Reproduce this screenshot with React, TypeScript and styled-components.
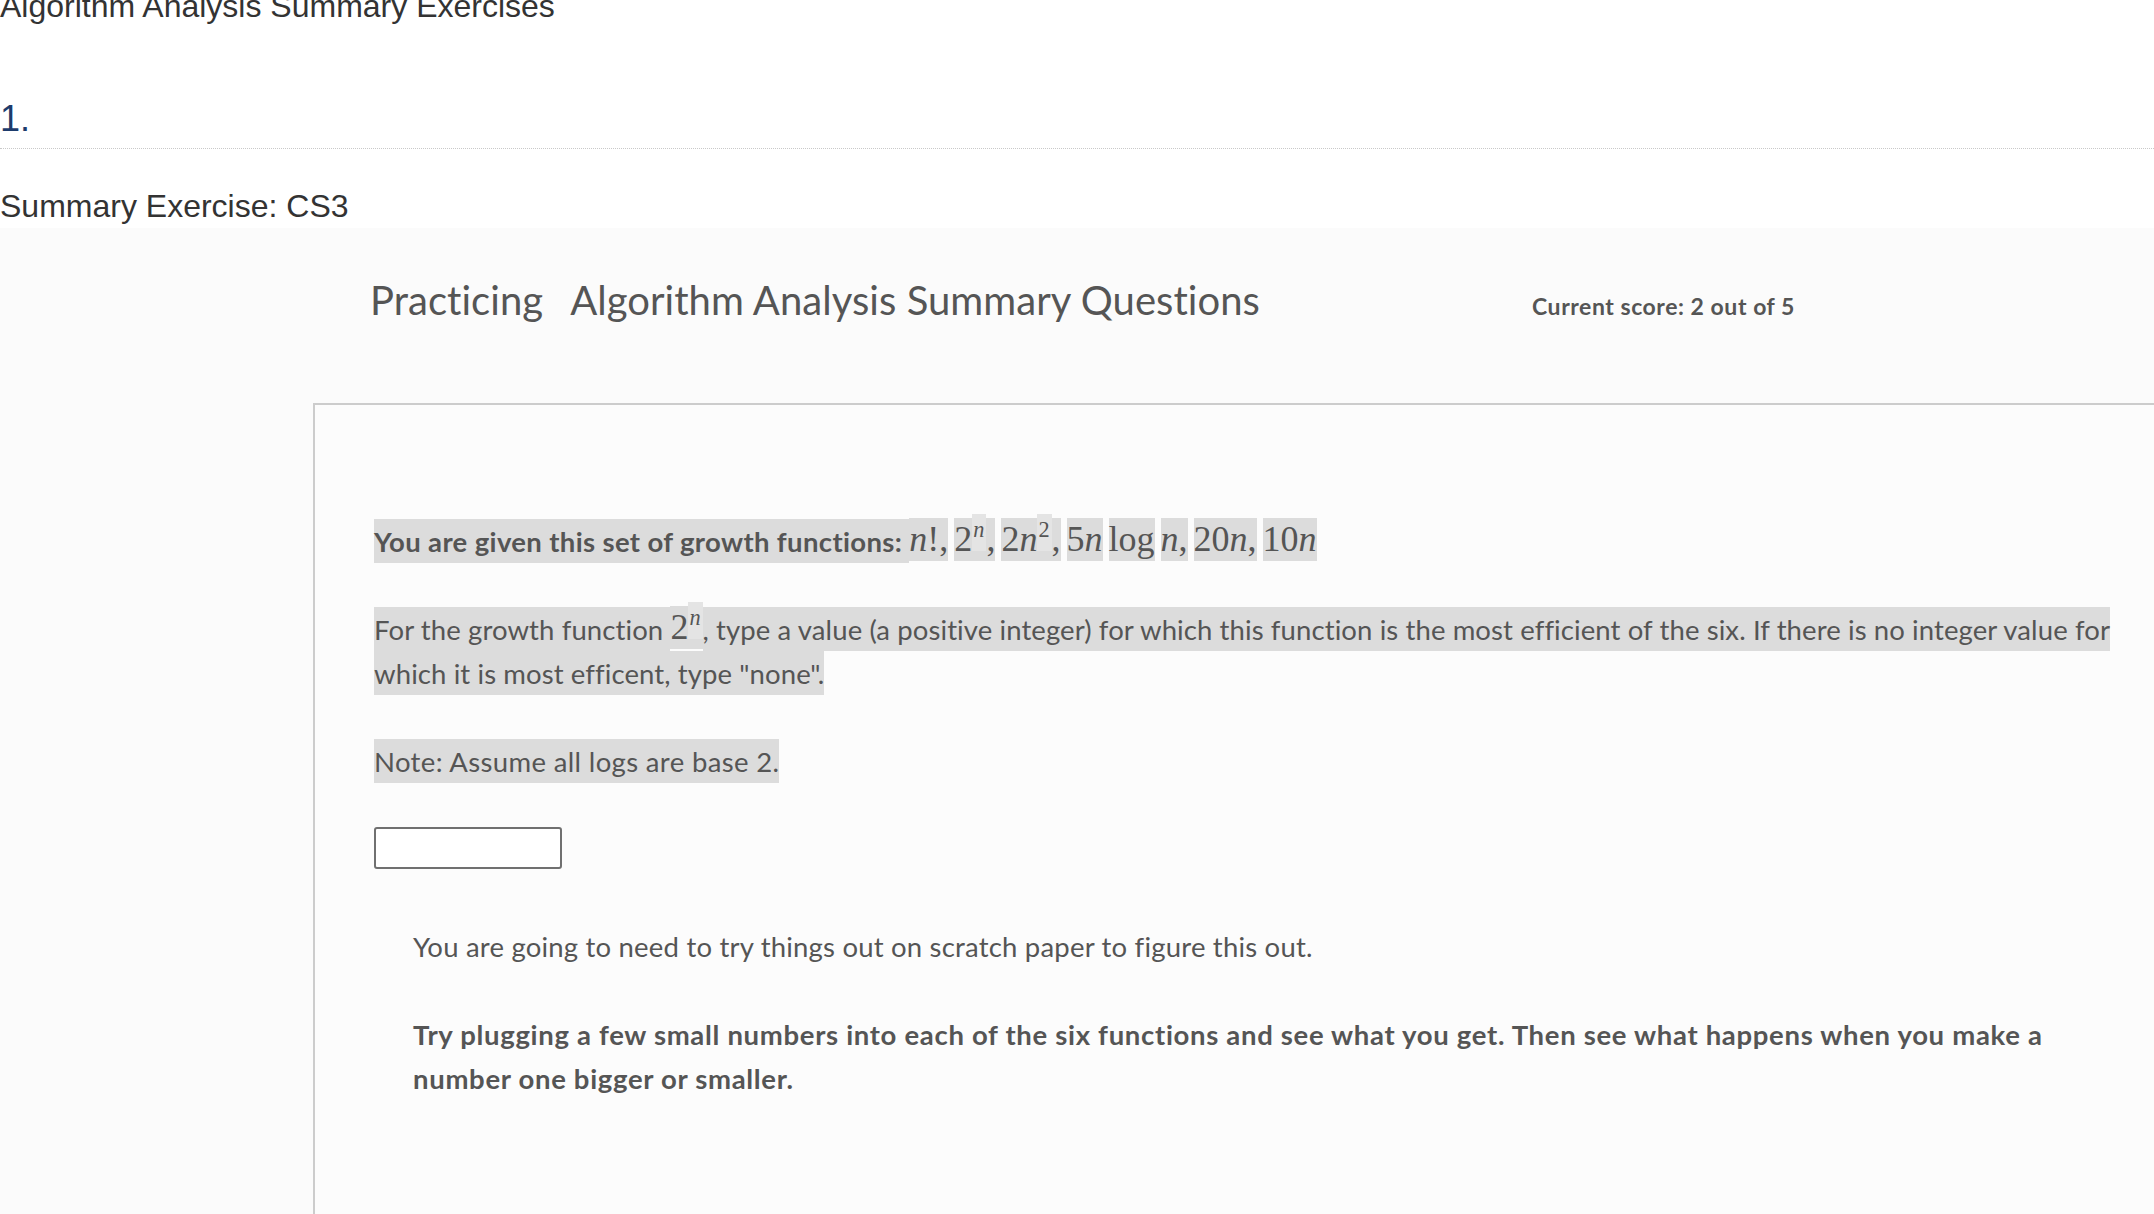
import React from "react";
import styled, { createGlobalStyle } from "styled-components";

const GlobalStyle = createGlobalStyle`
  html, body {
    margin: 0;
    padding: 0;
    background: #ffffff;
    overflow: hidden;
  }
  body {
    font-family: "Liberation Sans", Arial, sans-serif;
  }
`;

const Page = styled.div`
  width: 2154px;
  min-height: 1214px;
`;

const PageTitle = styled.h1`
  margin: -12px 0 0;
  font: 400 32px/36px "Liberation Sans", Arial, sans-serif;
  color: #333333;
  white-space: nowrap;
`;

const QuestionHeader = styled.div`
  margin-top: 75px;
  padding-bottom: 9px;
  border-bottom: 1px dotted #c9c9c9;
`;

const QuestionNumber = styled.span`
  display: block;
  font: 400 36px/40px "Liberation Sans", Arial, sans-serif;
  color: #1d3b6c;
`;

const ExerciseTitle = styled.h2`
  margin: 39px 0 4px;
  font: 400 32px/36px "Liberation Sans", Arial, sans-serif;
  color: #333333;
`;

const PracticeArea = styled.section`
  background: #fbfbfb;
  padding-top: 48px;
`;

const PracticeHeader = styled.div`
  display: flex;
  align-items: baseline;
  padding-left: 370px;
`;

const PracticeTitle = styled.h3`
  flex: 0 0 1162px;
  margin: 0;
  font: 400 40px/48px Lato, "Open Sans", sans-serif;
  letter-spacing: 0.05px;
  color: #555555;
  white-space: nowrap;
`;

const TitleMode = styled.span`
  margin-right: 27px;
`;

const Score = styled.div`
  font: 700 23px/28px Lato, "Open Sans", sans-serif;
  letter-spacing: 0.55px;
  color: #555555;
  white-space: nowrap;
`;

const QuestionBox = styled.div`
  box-sizing: border-box;
  width: 1870px;
  margin: 79px 0 0 313px;
  padding: 114px 59px 240px;
  border: 2px solid #cccccc;
  background: #fcfcfc;
`;

const Paragraph = styled.p<{ $spacing?: string }>`
  margin: 0 0 44px;
  font: 400 27.5px/44px Lato, "Open Sans", sans-serif;
  letter-spacing: ${(p) => p.$spacing ?? "0.35px"};
  color: #555555;
`;

const Highlight = styled.span<{ $bold?: boolean }>`
  background: #dcdcdc;
  padding: 5.5px 0;
  font-weight: ${(p) => (p.$bold ? 700 : 400)};
  -webkit-box-decoration-break: clone;
  box-decoration-break: clone;
`;

const MathGroup = styled.span`
  font-family: "Liberation Serif", "DejaVu Serif", serif;
  font-size: 36px;
  line-height: 1;
  letter-spacing: 0;
  color: #555555;
`;

const MathPiece = styled.span<{ $gap?: boolean }>`
  background: #dcdcdc;
  padding: 1px 0 2px;
  margin-right: ${(p) => (p.$gap ? "6px" : "0")};
`;

const Var = styled.i`
  font-style: italic;
`;

const Sup = styled.span`
  font-size: 0.62em;
  vertical-align: 0.65em;
  line-height: 0;
  background: #e4e4e4;
  padding: 3px 2px 9px 1px;
`;

const LogWord = styled.span`
  font-style: normal;
`;

const AnswerInput = styled.input`
  display: block;
  box-sizing: border-box;
  width: 188px;
  height: 42px;
  margin: 0;
  border: 2px solid #707070;
  border-radius: 3px;
  background: #ffffff;
  font: 400 22px Lato, sans-serif;
  color: #333;
  padding: 0 8px;
  outline: none;
`;

const Hints = styled.div`
  margin-top: 56px;
  padding-left: 39px;
`;

const HintText = styled.p<{ $bold?: boolean }>`
  margin: 0 0 44px;
  font: ${(p) => (p.$bold ? 700 : 400)} 27.5px/44px Lato, "Open Sans", sans-serif;
  letter-spacing: ${(p) => (p.$bold ? "0.68px" : "0.2px")};
  color: #555555;
`;

function GrowthFunctions() {
  return (
    <MathGroup>
      <MathPiece $gap>
        <Var>n</Var>!,
      </MathPiece>
      <MathPiece>
        2<Sup><Var>n</Var></Sup>
      </MathPiece>
      <MathPiece $gap>,</MathPiece>
      <MathPiece>
        2<Var>n</Var>
        <Sup>2</Sup>
      </MathPiece>
      <MathPiece $gap>,</MathPiece>
      <MathPiece $gap>
        5<Var>n</Var>
      </MathPiece>
      <MathPiece $gap>
        <LogWord>log</LogWord>
      </MathPiece>
      <MathPiece $gap>
        <Var>n</Var>,
      </MathPiece>
      <MathPiece $gap>
        20<Var>n</Var>,
      </MathPiece>
      <MathPiece>
        10<Var>n</Var>
      </MathPiece>
    </MathGroup>
  );
}

export default function App() {
  return (
    <>
      <GlobalStyle />
      <Page>
        <PageTitle>Algorithm Analysis Summary Exercises</PageTitle>
        <QuestionHeader>
          <QuestionNumber>1.</QuestionNumber>
        </QuestionHeader>
        <ExerciseTitle>Summary Exercise: CS3</ExerciseTitle>
        <PracticeArea>
          <PracticeHeader>
            <PracticeTitle>
              <TitleMode>Practicing</TitleMode>
              Algorithm Analysis Summary Questions
            </PracticeTitle>
            <Score>Current score: 2 out of 5</Score>
          </PracticeHeader>
          <QuestionBox>
            <Paragraph>
              <Highlight $bold>You are given this set of growth functions: </Highlight>
              <GrowthFunctions />
            </Paragraph>
            <Paragraph $spacing="0.1px">
              <Highlight>For the growth function </Highlight>
              <MathGroup>
                <MathPiece>
                  2<Sup><Var>n</Var></Sup>
                </MathPiece>
              </MathGroup>
              <Highlight>
                , type a value (a positive integer) for which this function is the most efficient of
                the six. If there is no integer value for which it is most efficent, type "none".
              </Highlight>
            </Paragraph>
            <Paragraph>
              <Highlight>Note: Assume all logs are base 2.</Highlight>
            </Paragraph>
            <AnswerInput type="text" aria-label="Answer" />
            <Hints>
              <HintText>
                You are going to need to try things out on scratch paper to figure this out.
              </HintText>
              <HintText $bold>
                Try plugging a few small numbers into each of the six functions and see what you get.
                Then see what happens when you make a number one bigger or smaller.
              </HintText>
            </Hints>
          </QuestionBox>
        </PracticeArea>
      </Page>
    </>
  );
}
